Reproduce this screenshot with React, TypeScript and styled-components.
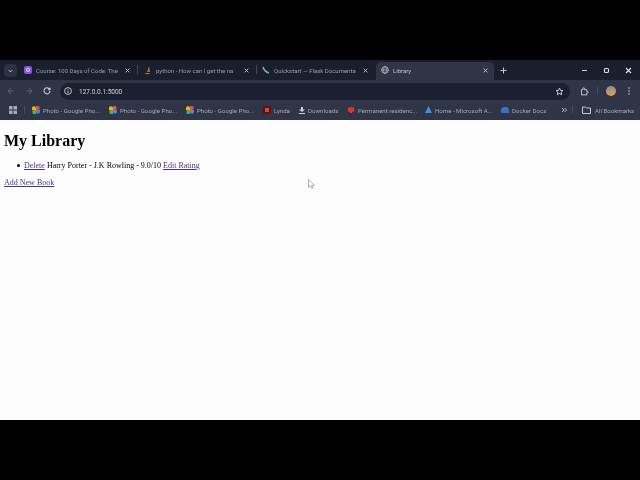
import React from "react";
import styled, { createGlobalStyle } from "styled-components";

const Global = createGlobalStyle`
  html, body { margin: 0; padding: 0; background: #000; width: 640px; height: 480px; overflow: hidden; }
`;
const Screen = styled.div`
  width: 640px; height: 480px; background: #000; padding: 60px 0; box-sizing: border-box;
  display: flex; flex-direction: column; filter: blur(0.45px);
`;
const Chrome = styled.div`
  height: 60px; flex: none; display: flex; flex-direction: column;
  font-family: "Roboto", "Liberation Sans", sans-serif; color: #c9ccd6;
`;
const Ico = styled.svg<{ $ml?: number; $mr?: number }>`
  flex: none; display: block;
  margin-left: ${p => p.$ml ?? 0}px; margin-right: ${p => p.$mr ?? 0}px;
`;
const TabStrip = styled.div`
  height: 20px; background: #1a1f2e; display: flex; align-items: flex-end; padding-left: 4px;
`;
const ListBtn = styled.div`
  width: 13px; height: 13px; border-radius: 4px; background: #2b3142; margin: 0 3px 3px 0; flex: none;
  display: flex; align-items: center; justify-content: center;
`;
const Tab = styled.div<{ $active?: boolean; $w: number }>`
  width: ${p => p.$w}px; height: 18px; flex: none; box-sizing: border-box;
  padding: 0 ${p => (p.$active ? 6 : 3)}px 2px ${p => (p.$active ? 5 : 4)}px;
  display: flex; align-items: center; gap: 4px; font-size: 6px; white-space: nowrap;
  color: ${p => (p.$active ? "#bfc3cf" : "#9a9fad")};
  background: ${p => (p.$active ? "#2f3546" : "transparent")};
  border-radius: ${p => (p.$active ? "5px 5px 0 0" : "0")};
`;
const TabTitle = styled.span`
  flex: 1; overflow: hidden; white-space: nowrap;
`;
const Sep = styled.div`
  width: 1px; height: 9px; background: #3f4557; flex: none; margin: 0 0 6px 4px; align-self: flex-end;
`;
const TabGap = styled.div<{ $w: number }>`
  width: ${p => p.$w}px; flex: none;
`;
const Plus = styled.div`
  margin: 0 0 3px 4px; width: 10px; height: 14px; display: flex; align-items: center; justify-content: center; flex: none;
`;
const WinControls = styled.div`
  margin-left: auto; display: flex; gap: 15px; align-items: center; padding: 0 8px 2px 0; height: 18px; box-sizing: border-box;
`;
const Toolbar = styled.div`
  height: 20px; box-sizing: border-box; background: #2f3546; display: flex; align-items: center;
  padding: 2px 0 0 7px; gap: 10px;
`;
const Omnibox = styled.div`
  width: 510px; height: 17px; background: #1b2030; border-radius: 9px; display: flex; align-items: center; flex: none;
  padding: 0 6.5px 0 4px; box-sizing: border-box; gap: 7px; font-size: 6.5px; color: #d0d3dc; margin-left: -1px;
`;
const Url = styled.span`
  flex: 1; padding-top: 1px;
`;
const ToolDivider = styled.div`
  width: 1px; height: 8px; background: #4b5164; flex: none; margin-left: -2px;
`;
const Bookmarks = styled.div`
  height: 20px; background: #2f3546; display: flex; align-items: center; padding: 0 0 0 9px; font-size: 6.1px; color: #a4a9b6;
`;
const Bookmark = styled.div<{ $w: number }>`
  width: ${p => p.$w}px; flex: none; display: flex; align-items: center; gap: 3px; white-space: nowrap;
`;
const BarSep = styled.div<{ $l: number; $r: number }>`
  width: 1px; height: 8px; background: #454b5e; flex: none; margin: 0 ${p => p.$r}px 0 ${p => p.$l}px;
`;
const Page = styled.main`
  height: 300px; background: #fdfdfd; padding: 13px 4px 0; box-sizing: border-box; color: #000; position: relative;
  font-family: "Liberation Serif", "Times New Roman", serif; font-size: 8px; line-height: 9px;
`;
const Title = styled.h1`
  font-size: 16px; line-height: 16px; font-weight: 700; margin: 0 0 12px;
`;
const Books = styled.ul`
  margin: 0 0 8px; padding: 0 0 0 20px; list-style: none;
`;
const Book = styled.li`
  position: relative;
  &::before {
    content: ""; position: absolute; left: -7px; top: 3px; width: 3px; height: 3px; border-radius: 50%; background: #000;
  }
`;
const Link = styled.a`
  color: #46348c; text-decoration: underline;
`;
const Cursor = styled.svg`
  position: absolute; left: 308px; top: 59px;
`;
const Globe = () => (
  <Ico width="8" height="8" viewBox="0 0 12 12" fill="none" stroke="#b9bdc9" strokeWidth="1.4">
    <circle cx="6" cy="6" r="5" />
    <path d="M1 6h10M6 1c3 3 3 7 0 10M6 1c-3 3-3 7 0 10" strokeWidth="1" />
  </Ico>
);
const Close = () => (
  <Ico width="5" height="5" viewBox="0 0 6 6" stroke="#c5c8d2" strokeWidth="1.1">
    <path d="M.8.8l4.4 4.4M5.2.8L.8 5.2" />
  </Ico>
);
const Pin = () => (
  <Ico width="8" height="8" viewBox="0 0 8 8">
    <path d="M4 4V0h1.500a2 2 0 0 1 .5 4z" fill="#e0524a" />
    <path d="M4 4h4v1.500a2 2 0 0 1-4 .5z" fill="#4a86e8" />
    <path d="M4 4v4H2.500a2 2 0 0 1-.5-4z" fill="#4caf50" />
    <path d="M4 4H0V2.500a2 2 0 0 1 4-.5z" fill="#f4b400" />
  </Ico>
);
const Bm = ({ w, icon, text }: { w: number; icon: React.ReactNode; text: string }) => (
  <Bookmark $w={w}>{icon}<span>{text}</span></Bookmark>
);

export default function App() {
  return (
    <Screen>
      <Global />
      <Chrome>
        <TabStrip>
          <ListBtn>
            <Ico width="5" height="4" viewBox="0 0 6 4" fill="none" stroke="#d0d3dc" strokeWidth="1.2"><path d="M1 1l2 2 2-2" /></Ico>
          </ListBtn>
          <Tab $w={113}>
            <Ico width="8" height="8" viewBox="0 0 8 8"><rect width="8" height="8" rx="2" fill="#8a52e8" /><circle cx="4" cy="4" r="1.600" fill="none" stroke="#e6dcfa" /></Ico>
            <TabTitle>Course: 100 Days of Code: The</TabTitle>
            <Close />
          </Tab>
          <Sep />
          <TabGap $w={2} />
          <Tab $w={112}>
            <Ico width="8" height="8" viewBox="0 0 8 8"><path d="M1 7h5l-.5 1H1.500zM3 6l2-6 1 6z" fill="#b0703c" /></Ico>
            <TabTitle>python - How can I get the na</TabTitle>
            <Close />
          </Tab>
          <Sep />
          <TabGap $w={1} />
          <Tab $w={113}>
            <Ico width="8" height="8" viewBox="0 0 8 8" fill="none" stroke="#67b7c9" strokeWidth="1.500"><path d="M1 1c1 4 3 5 6 6" /></Ico>
            <TabTitle>Quickstart — Flask Documenta</TabTitle>
            <Close />
          </Tab>
          <TabGap $w={5} />
          <Tab $w={118} $active>
            <Globe />
            <TabTitle>Library</TabTitle>
            <Close />
          </Tab>
          <Plus>
            <Ico width="7" height="7" viewBox="0 0 7 7" stroke="#c5c8d2" strokeWidth="1"><path d="M3.500.5v6M.5 3.500h6" /></Ico>
          </Plus>
          <WinControls>
            <Ico width="7" height="7" viewBox="0 0 7 7" stroke="#d0d3dc" strokeWidth="1"><path d="M1 3.500h5" /></Ico>
            <Ico width="7" height="7" viewBox="0 0 7 7" stroke="#d0d3dc" strokeWidth="1.200" fill="none"><rect x="1.500" y="1.500" width="4" height="4" rx="1" /></Ico>
            <Ico width="7" height="7" viewBox="0 0 7 7" stroke="#e0e2e8" strokeWidth="1.100"><path d="M1 1l5 5M6 1L1 6" /></Ico>
          </WinControls>
        </TabStrip>
        <Toolbar>
          <Ico width="8" height="8" viewBox="0 0 8 8" fill="none" stroke="#5f6577" strokeWidth="1"><path d="M7 4H1M4 1L1 4l3 3" /></Ico>
          <Ico width="8" height="8" viewBox="0 0 8 8" fill="none" stroke="#5f6577" strokeWidth="1"><path d="M1 4h6M4 1l3 3-3 3" /></Ico>
          <Ico width="8" height="8" viewBox="0 0 8 8" fill="none" stroke="#c5c8d2" strokeWidth="1.100"><path d="M6.700 2.500A3 3 0 1 0 7 4M7 .8v2H5" /></Ico>
          <Omnibox>
            <Ico width="8" height="8" viewBox="0 0 8 8" fill="none" stroke="#d5d7df" strokeWidth=".9">
              <circle cx="4" cy="4" r="3.400" />
              <path d="M4 3.500v2.500M4 2v.8" />
            </Ico>
            <Url>127.0.0.1:5000</Url>
            <Ico width="9" height="9" viewBox="0 0 24 24" fill="none" stroke="#d5d7df" strokeWidth="2.500"><path d="M12 3l2.800 6 6.200.7-4.600 4.300 1.300 6.500L12 17l-5.700 3.500L7.600 14 3 9.700 9.200 9z" /></Ico>
          </Omnibox>
          <Ico width="9" height="9" viewBox="0 0 24 24" fill="none" stroke="#d0d3dc" strokeWidth="2.400"><path d="M4 7h4V4a2 2 0 0 1 4 0v3h6v5h2a2 2 0 0 1 0 4h-2v5H4z" /></Ico>
          <ToolDivider />
          <Ico $ml={-2} width="10" height="10" viewBox="0 0 10 10"><defs><linearGradient id="av" x1="0" y1="0" x2="0" y2="1"><stop offset="0" stopColor="#8d8f96" /><stop offset="1" stopColor="#d9a055" /></linearGradient></defs><circle cx="5" cy="5" r="5" fill="url(#av)" /></Ico>
          <Ico $ml={2} width="2" height="8" viewBox="0 0 2 8" fill="#c5c8d2"><circle cx="1" cy="1" r=".8" /><circle cx="1" cy="4" r=".8" /><circle cx="1" cy="7" r=".8" /></Ico>
        </Toolbar>
        <Bookmarks>
          <Ico width="8" height="8" viewBox="0 0 8 8" fill="#a4a9b6"><rect width="3.500" height="3.500" /><rect x="4.500" width="3.500" height="3.500" /><rect y="4.500" width="3.500" height="3.500" /><rect x="4.500" y="4.500" width="3.500" height="3.500" /></Ico>
          <BarSep $l={7} $r={7} />
          <Bm w={77} icon={<Pin />} text="Photo - Google Pho..." />
          <Bm w={77} icon={<Pin />} text="Photo - Google Pho..." />
          <Bm w={77} icon={<Pin />} text="Photo - Google Pho..." />
          <Bm w={36} icon={<Ico width="8" height="8"><rect width="8" height="8" fill="#5a1612" /><rect x="2" y="2" width="4" height="4" fill="#d6453a" /></Ico>} text="Lynda" />
          <Bm w={48} icon={<Ico width="6" height="7" viewBox="0 0 6 7" fill="#d0d3dc"><path d="M2 0h2v2.500h2L3 5 0 2.500h2zM0 6h6v1H0z" /></Ico>} text="Downloads" />
          <Bm w={77} icon={<Ico width="8" height="8" viewBox="0 0 8 8"><path d="M4 0l1 2 2-1 0 3 1 1-3 1v1H3V6L0 5l1-1 0-3 2 1z" fill="#d9382e" /></Ico>} text="Permanent residenc..." />
          <Bm w={77} icon={<Ico width="8" height="8" viewBox="0 0 8 8"><path d="M4.500 0L8 7H1z" fill="#3f8fe0" /></Ico>} text="Home - Microsoft A..." />
          <Bm w={60} icon={<Ico width="8" height="8" viewBox="0 0 8 8"><path d="M0 5a4 4 0 0 1 8 0v2H0z" fill="#3575c9" /></Ico>} text="Docker Docs" />
          <Ico width="6" height="6" viewBox="0 0 6 6" fill="none" stroke="#c5c8d2" strokeWidth=".9"><path d="M1 1l2 2-2 2M3.500 1l2 2-2 2" /></Ico>
          <BarSep $l={5} $r={9} />
          <Bookmark $w={50}>
            <Ico $mr={1} width="9" height="8" viewBox="0 0 9 8" fill="none" stroke="#c5c8d2" strokeWidth="1"><path d="M.5 1h3l1 1h4v5.500h-8z" /></Ico>
            <span>All Bookmarks</span>
          </Bookmark>
        </Bookmarks>
      </Chrome>
      <Page>
        <Title>My Library</Title>
        <Books>
          <Book><Link href="#">Delete</Link> Harry Porter - J.K Rowling - 9.0/10 <Link href="#">Edit Rating</Link></Book>
        </Books>
        <Link href="#">Add New Book</Link>
        <Cursor width="7" height="10" viewBox="0 0 7 10"><path d="M.5.5v8l2-1.800 1.300 2.800 1.200-.5L3.700 6.200H6.500z" fill="#fff" stroke="#8a8f96" strokeWidth=".7" /></Cursor>
      </Page>
    </Screen>
  );
}
